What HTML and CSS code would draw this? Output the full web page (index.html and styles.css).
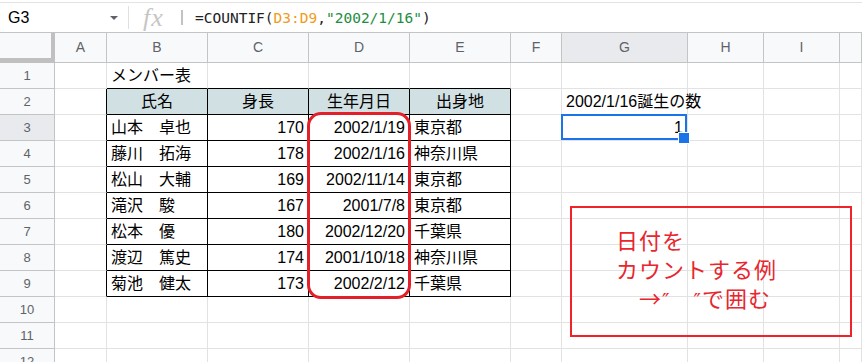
FILE: index.html
```html
<!DOCTYPE html>
<html lang="ja">

<head>
    <meta charset="UTF-8">
    <meta name="viewport" content="width=device-width, initial-scale=1.0">
    <title>COUNTIF 日付の例</title>
    <link rel="stylesheet" href="styles.css">
</head>

<body>
    <div class="app">
        <div class="formula-bar">
            <div class="name-box">G3<span class="caret"></span></div>
            <div class="divider"></div>
            <div class="fx">fx</div>
            <div class="bar"></div>
            <div class="formula">=COUNTIF(<span class="ref">D3:D9</span>,<span class="str">"2002/1/16"</span>)</div>
        </div>

        <div class="sheet">
            <!-- column headers -->
            <div class="c corner"></div>
            <div class="c ch">A</div>
            <div class="c ch">B</div>
            <div class="c ch">C</div>
            <div class="c ch">D</div>
            <div class="c ch">E</div>
            <div class="c ch">F</div>
            <div class="c ch on">G</div>
            <div class="c ch">H</div>
            <div class="c ch">I</div>
            <div class="c ch"></div>

            <!-- row 1 -->
            <div class="c rh">1</div>
            <div class="c"></div>
            <div class="c tt">メンバー表</div>
            <div class="c tt"></div>
            <div class="c tt"></div>
            <div class="c tt"></div>
            <div class="c"></div><div class="c"></div><div class="c"></div><div class="c"></div><div class="c"></div>

            <!-- row 2 -->
            <div class="c rh">2</div>
            <div class="c tl"></div>
            <div class="c tb th">氏名</div>
            <div class="c tb th">身長</div>
            <div class="c tb th">生年月日</div>
            <div class="c tb th">出身地</div>
            <div class="c"></div>
            <div class="c">2002/1/16誕生の数</div>
            <div class="c"></div><div class="c"></div><div class="c"></div>

            <!-- row 3 -->
            <div class="c rh on">3</div>
            <div class="c tl"></div>
            <div class="c tb">山本　卓也</div>
            <div class="c tb num">170</div>
            <div class="c tb num">2002/1/19</div>
            <div class="c tb">東京都</div>
            <div class="c"></div>
            <div class="c num active">1</div>
            <div class="c"></div><div class="c"></div><div class="c"></div>

            <!-- row 4 -->
            <div class="c rh">4</div>
            <div class="c tl"></div>
            <div class="c tb">藤川　拓海</div>
            <div class="c tb num">178</div>
            <div class="c tb num">2002/1/16</div>
            <div class="c tb">神奈川県</div>
            <div class="c"></div><div class="c"></div><div class="c"></div><div class="c"></div><div class="c"></div>

            <!-- row 5 -->
            <div class="c rh">5</div>
            <div class="c tl"></div>
            <div class="c tb">松山　大輔</div>
            <div class="c tb num">169</div>
            <div class="c tb num">2002/11/14</div>
            <div class="c tb">東京都</div>
            <div class="c"></div><div class="c"></div><div class="c"></div><div class="c"></div><div class="c"></div>

            <!-- row 6 -->
            <div class="c rh">6</div>
            <div class="c tl"></div>
            <div class="c tb">滝沢　駿</div>
            <div class="c tb num">167</div>
            <div class="c tb num">2001/7/8</div>
            <div class="c tb">東京都</div>
            <div class="c"></div><div class="c"></div><div class="c"></div><div class="c"></div><div class="c"></div>

            <!-- row 7 -->
            <div class="c rh">7</div>
            <div class="c tl"></div>
            <div class="c tb">松本　優</div>
            <div class="c tb num">180</div>
            <div class="c tb num">2002/12/20</div>
            <div class="c tb">千葉県</div>
            <div class="c"></div><div class="c"></div><div class="c"></div><div class="c"></div><div class="c"></div>

            <!-- row 8 -->
            <div class="c rh">8</div>
            <div class="c tl"></div>
            <div class="c tb">渡辺　篤史</div>
            <div class="c tb num">174</div>
            <div class="c tb num">2001/10/18</div>
            <div class="c tb">神奈川県</div>
            <div class="c"></div><div class="c"></div><div class="c"></div><div class="c"></div><div class="c"></div>

            <!-- row 9 -->
            <div class="c rh">9</div>
            <div class="c tl"></div>
            <div class="c tb">菊池　健太</div>
            <div class="c tb num">173</div>
            <div class="c tb num">2002/2/12</div>
            <div class="c tb">千葉県</div>
            <div class="c"></div><div class="c"></div><div class="c"></div><div class="c"></div><div class="c"></div>

            <!-- rows 10 - 12 -->
            <div class="c rh">10</div>
            <div class="c"></div><div class="c"></div><div class="c"></div><div class="c"></div><div class="c"></div>
            <div class="c"></div><div class="c"></div><div class="c"></div><div class="c"></div><div class="c"></div>

            <div class="c rh">11</div>
            <div class="c"></div><div class="c"></div><div class="c"></div><div class="c"></div><div class="c"></div>
            <div class="c"></div><div class="c"></div><div class="c"></div><div class="c"></div><div class="c"></div>

            <div class="c rh">12</div>
            <div class="c"></div><div class="c"></div><div class="c"></div><div class="c"></div><div class="c"></div>
            <div class="c"></div><div class="c"></div><div class="c"></div><div class="c"></div><div class="c"></div>
        </div>

        <!-- drawings placed over the sheet -->
        <div class="ring"></div>
        <div class="note">日付を<br>カウントする例<br>　→<span class="q">″</span>　<span class="q">″</span>で囲む</div>
    </div>
</body>

</html>
```

FILE: styles.css
```css
* {
    box-sizing: border-box;
}

body {
    margin: 0;
    background-color: #fff;
    color: #000;
    font-family: "Liberation Sans", Arial, "Noto Sans CJK JP", sans-serif;
}

.app {
    position: relative;
    width: 862px;
    height: 362px;
    overflow: hidden;
}

/* formula bar */

.formula-bar {
    display: flex;
    align-items: center;
    height: 31px;
    margin-top: 2px;
    border-top: 1px solid #e3e3e3;
    border-bottom: 1px solid #c4c4c4;
}

.name-box {
    display: flex;
    align-items: center;
    justify-content: space-between;
    width: 128px;
    padding: 0 10px 0 8px;
    font-size: 16px;
}

.caret {
    width: 0;
    height: 0;
    border-left: 4px solid transparent;
    border-right: 4px solid transparent;
    border-top: 4px solid #5f6368;
}

.divider {
    width: 1px;
    height: 23px;
    background-color: #e0e0e0;
}

.fx {
    width: 52px;
    padding-left: 14px;
    font-family: "Liberation Serif", serif;
    font-style: italic;
    font-size: 26px;
    letter-spacing: 1px;
    color: #c6c6c6;
    line-height: 28px;
}

.bar {
    width: 2px;
    height: 15px;
    background-color: #c2c2c2;
}

.formula {
    margin-left: 12px;
    font-family: "DejaVu Sans Mono", monospace;
    font-size: 14.5px;
    color: #222;
}

.ref {
    color: #f29b22;
}

.str {
    color: #1e8e3e;
}

/* grid */

.sheet {
    display: grid;
    grid-template-columns: 55px 52px 101px 101px 101px 101px 51px 126px 76px 76px 1fr;
    grid-template-rows: 30px;
    grid-auto-rows: 26px;
}

.c {
    padding: 0 4px;
    border-right: 1px solid #e2e2e2;
    border-bottom: 1px solid #e2e2e2;
    font-size: 16px;
    line-height: 25px;
    white-space: nowrap;
}

.corner {
    background-color: #f8f9fa;
    border-right: 4px solid #c0c0c0;
    border-bottom: 5px solid #c0c0c0;
}

.ch,
.rh {
    background-color: #f8f9fa;
    border-color: #c4c4c4;
    color: #5f6368;
    text-align: center;
}

.ch {
    font-size: 14px;
    line-height: 29px;
}

.rh {
    font-size: 13px;
}

.ch.on,
.rh.on {
    background-color: #e8eaed;
}

.tt {
    border-bottom-color: #000;
}

.tl {
    border-right-color: #000;
}

.tb {
    border-color: #000;
}

.th {
    background-color: #d0e0e3;
    text-align: center;
}

.num {
    text-align: right;
}

.active {
    position: relative;
}

.active::before {
    content: "";
    position: absolute;
    left: -1px;
    top: -1px;
    right: 0;
    bottom: 0;
    border: 2px solid #1a73e8;
}

.active::after {
    content: "";
    position: absolute;
    right: -3px;
    bottom: -4px;
    width: 10px;
    height: 10px;
    background-color: #1a73e8;
    border: 1px solid #fff;
}

/* drawings */

.ring {
    position: absolute;
    left: 307px;
    top: 112px;
    width: 104px;
    height: 187px;
    border: 3px solid #e3202a;
    border-radius: 14px;
}

.note {
    position: absolute;
    left: 570px;
    top: 206px;
    width: 282px;
    height: 131px;
    padding: 17px 0 0 44px;
    border: 2px solid #f0222a;
    color: #e8262e;
    font-family: "Noto Sans CJK JP", sans-serif;
    font-size: 22px;
    line-height: 29px;
    letter-spacing: 1px;
}

.q {
    font-family: "DejaVu Sans", sans-serif;
    font-size: 20px;
}
```
